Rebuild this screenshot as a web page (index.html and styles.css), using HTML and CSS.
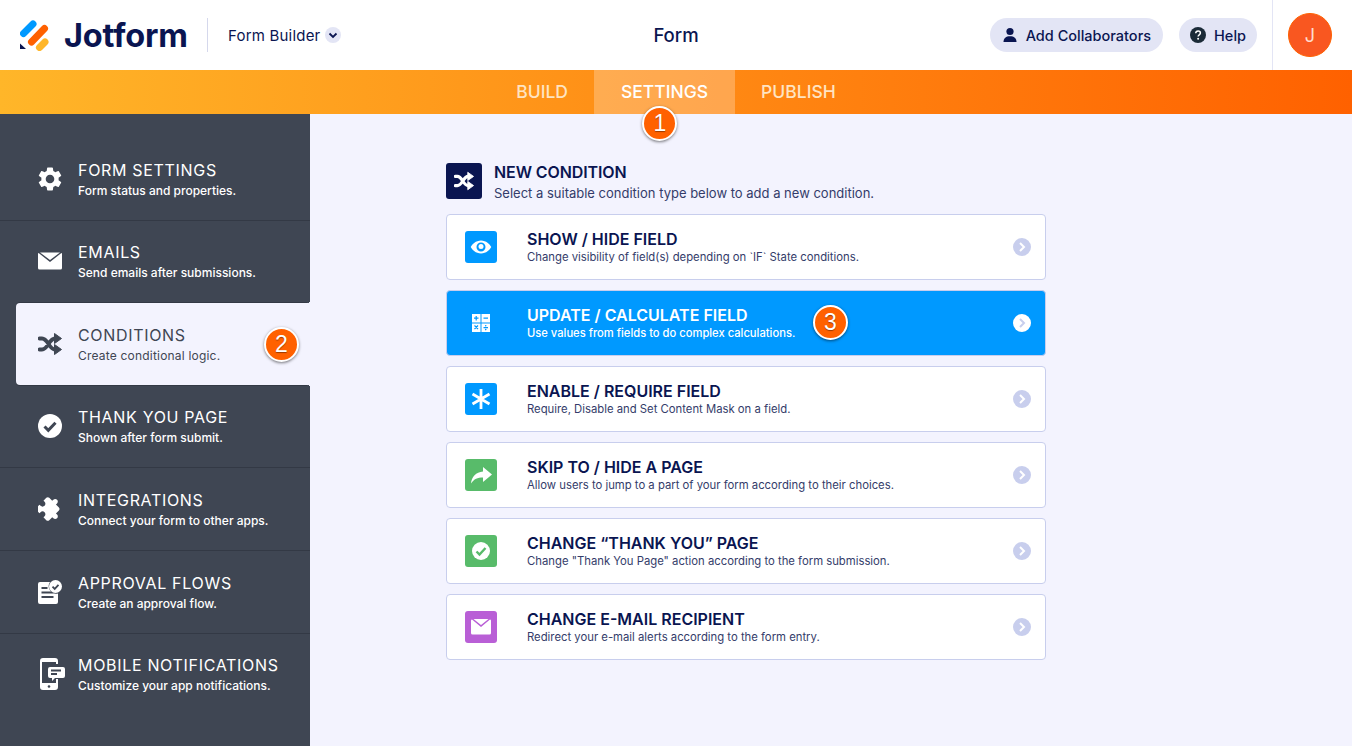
FILE: index.html
```html
<!DOCTYPE html>
<html lang="en">
<head>
<meta charset="utf-8">
<title>Jotform Form Builder</title>
<link rel="stylesheet" href="styles.css">
</head>
<body>
<svg class="defs" width="0" height="0" aria-hidden="true">
  <symbol id="shuffle" viewBox="0 0 24 24">
    <path d="M1.500 6.500h2.500c6 0 7 11 13 11h1M1.500 17.500h2.500c6 0 7-11 13-11h1" fill="none" stroke="currentColor" stroke-width="3.800" stroke-linecap="round"/>
    <path d="M16.500 1.500l7 5-7 5zM16.500 12.500l7 5-7 5z" fill="currentColor" stroke="currentColor" stroke-linejoin="round"/>
  </symbol>
  <symbol id="chev" viewBox="0 0 18 18">
    <path d="M7 5l4 4-4 4" fill="none" stroke="currentColor" stroke-width="2"/>
  </symbol>
</svg>
<header class="topbar">
  <div class="brand">
    <svg class="logo" viewBox="0 0 30 32" width="30" height="32">
      <path d="M3.500 14.500L13 5" stroke="#0099ff" stroke-width="7" stroke-linecap="round"/>
      <path d="M11.500 23L24.500 9.500" stroke="#ff6100" stroke-width="7" stroke-linecap="round"/>
      <path d="M19.500 28.500L25 23" stroke="#ffb629" stroke-width="7" stroke-linecap="round"/>
      <path d="M0 24.500V30h6z" fill="#0a1551"/>
    </svg>
    <span class="wordmark">Jotform</span>
    <span class="brand-sep"></span>
    <span class="builder">Form Builder</span>
    <span class="builder-caret"><svg viewBox="0 0 16 16" width="16" height="16"><path d="M4.500 6.500L8 10l3.500-3.500" fill="none" stroke="#0a1551" stroke-width="1.800"/></svg></span>
  </div>
  <div class="form-title">Form</div>
  <div class="actions">
    <button class="pill">
      <svg viewBox="0 0 16 16" width="16" height="16"><circle cx="8" cy="4.500" r="3.600" fill="#0a1551"/><path d="M1.500 15c0-4 2.500-5.800 6.500-5.800s6.500 1.800 6.500 5.800z" fill="#0a1551"/></svg>
      Add Collaborators
    </button>
    <button class="pill pill-help">
      <svg viewBox="0 0 16 16" width="16" height="16"><circle cx="8" cy="8" r="8" fill="#1b2b38"/><path d="M5.700 6.200C5.800 4.800 6.800 4 8.100 4s2.300.8 2.300 2c0 1.900-2.300 1.800-2.300 3.600" fill="none" stroke="#fff" stroke-width="1.500"/><circle cx="8.100" cy="11.700" r="1" fill="#fff"/></svg>
      Help
    </button>
    <div class="avatar-wrap"><div class="avatar">J</div></div>
  </div>
</header>
<nav class="tabs">
  <a class="tab">BUILD</a>
  <a class="tab active">SETTINGS<span class="badge badge-tab">1</span></a>
  <a class="tab">PUBLISH</a>
</nav>
<div class="layout">
  <aside class="sidebar">
    <a class="side-item">
      <svg class="side-icon" viewBox="2 2 20 20"><path fill="currentColor" d="M19.140 12.940c.04-.3.06-.61.06-.94 0-.32-.02-.64-.07-.94l2.030-1.580a.49.49 0 0 0 .12-.61l-1.920-3.320a.488.488 0 0 0-.59-.22l-2.390.96c-.5-.38-1.030-.7-1.620-.94l-.36-2.540a.484.484 0 0 0-.48-.41h-3.840c-.24 0-.43.17-.47.41l-.36 2.540c-.59.24-1.130.57-1.620.94l-2.390-.96c-.22-.08-.47 0-.59.22L2.740 8.870c-.12.21-.08.47.12.61l2.030 1.580c-.05.3-.09.63-.09.94s.02.64.07.94l-2.030 1.580a.49.49 0 0 0-.12.61l1.920 3.320c.12.22.37.29.59.22l2.390-.96c.5.38 1.030.7 1.620.94l.36 2.540c.05.24.24.41.48.41h3.840c.24 0 .44-.17.47-.41l.36-2.540c.59-.24 1.130-.56 1.620-.94l2.390.96c.22.08.47 0 .59-.22l1.920-3.320c.12-.22.07-.47-.12-.61l-2.010-1.580zM12 15.600c-1.980 0-3.600-1.620-3.600-3.600s1.620-3.600 3.600-3.600 3.600 1.620 3.600 3.600-1.620 3.600-3.600 3.600z"/></svg>
      <span class="side-text"><strong>FORM SETTINGS</strong><small>Form status and properties.</small></span>
    </a>
    <a class="side-item">
      <svg class="side-icon" viewBox="0 0 24 24"><path fill="currentColor" d="M0 4.500A1.500 1.500 0 0 1 .6 4L12 13 23.400 4a1.500 1.500 0 0 1 .6.500V19a1.500 1.500 0 0 1-1.500 1.500h-21A1.500 1.500 0 0 1 0 19zM2 3.500h20L12 11z"/></svg>
      <span class="side-text"><strong>EMAILS</strong><small>Send emails after submissions.</small></span>
    </a>
    <a class="side-item current">
      <svg class="side-icon" viewBox="0 0 24 24"><use href="#shuffle"/></svg>
      <span class="side-text"><strong>CONDITIONS</strong><small>Create conditional logic.</small></span>
      <span class="badge badge-side">2</span>
    </a>
    <a class="side-item">
      <svg class="side-icon" viewBox="0 0 24 24"><circle cx="12" cy="12" r="12" fill="currentColor"/><path d="M6.500 12.500l3.800 3.800 7.200-7.600" fill="none" stroke="#3f4653" stroke-width="3"/></svg>
      <span class="side-text"><strong>THANK YOU PAGE</strong><small>Shown after form submit.</small></span>
    </a>
    <a class="side-item">
      <svg class="side-icon" viewBox="0 0 24 24"><path fill="currentColor" transform="rotate(45 12 12) translate(-.6 -.6) scale(1.050)" d="M20.500 11H19V7c0-1.100-.9-2-2-2h-4V3.500C13 2.120 11.880 1 10.500 1S8 2.120 8 3.500V5H4c-1.100 0-1.990.9-1.990 2v3.800H3.500c1.490 0 2.700 1.210 2.700 2.700s-1.210 2.700-2.700 2.700H2V20c0 1.100.9 2 2 2h3.800v-1.500c0-1.490 1.210-2.700 2.700-2.700 1.490 0 2.700 1.210 2.700 2.700V22H17c1.100 0 2-.9 2-2v-4h1.500c1.380 0 2.500-1.120 2.500-2.500S21.880 11 20.500 11z"/></svg>
      <span class="side-text"><strong>INTEGRATIONS</strong><small>Connect your form to other apps.</small></span>
    </a>
    <a class="side-item">
      <svg class="side-icon" viewBox="0 0 24 24"><path fill="currentColor" d="M2 2h10a7.500 7.500 0 0 0 8 11.500V22a2 2 0 0 1-2 2H2a2 2 0 0 1-2-2V4a2 2 0 0 1 2-2z"/><path d="M3.500 8h6M3.500 12.500h12M3.500 17h12" stroke="#3f4653" stroke-width="2"/><circle cx="17.500" cy="6.500" r="6.500" fill="currentColor"/><path d="M14.500 6.700l2.200 2.200 3.800-4" fill="none" stroke="#3f4653" stroke-width="1.800"/></svg>
      <span class="side-text"><strong>APPROVAL FLOWS</strong><small>Create an approval flow.</small></span>
    </a>
    <a class="side-item last">
      <svg class="side-icon phone" viewBox="0 0 26 32"><path fill="currentColor" d="M4 0h12a3 3 0 0 1 3 3v3h-2V4H3v21h14v-4h2v8a3 3 0 0 1-3 3H4a3 3 0 0 1-3-3V3a3 3 0 0 1 3-3z"/><circle cx="10" cy="28.500" r="1.300" fill="#3f4653"/><path fill="currentColor" d="M11 9h13a2 2 0 0 1 2 2v7a2 2 0 0 1-2 2h-8l-3 3v-3h-2a2 2 0 0 1-2-2v-7a2 2 0 0 1 2-2z"/><path d="M12 12.500h10M12 16h6" stroke="#3f4653" stroke-width="1.800"/></svg>
      <span class="side-text"><strong>MOBILE NOTIFICATIONS</strong><small>Customize your app notifications.</small></span>
    </a>
  </aside>
  <main class="content">
    <section class="panel">
      <div class="panel-head">
        <span class="head-icon"><svg viewBox="0 0 24 24" width="20" height="20"><use href="#shuffle"/></svg></span>
        <div class="head-text">
          <h1>NEW CONDITION</h1>
          <p>Select a suitable condition type below to add a new condition.</p>
        </div>
      </div>
      <div class="cards">
        <a class="card">
          <span class="card-icon blue"><svg viewBox="0 0 24 24" width="24" height="24"><path fill="#fff" fill-rule="evenodd" d="M12 5.500c5.200 0 8.800 3.800 10.300 6.500-1.500 2.700-5.100 6.500-10.300 6.500S3.200 14.700 1.700 12C3.200 9.300 6.800 5.500 12 5.500zM12 7.500a4.500 4.500 0 1 0 0 9 4.500 4.500 0 0 0 0-9z"/><circle cx="12" cy="11.500" r="2.500" fill="#fff"/></svg></span>
          <span class="card-text"><strong>SHOW / HIDE FIELD</strong><small>Change visibility of field(s) depending on `IF` State conditions.</small></span>
          <span class="card-go"><svg viewBox="0 0 18 18" width="18" height="18"><use href="#chev"/></svg></span>
        </a>
        <a class="card selected">
          <span class="card-icon blue"><svg viewBox="0 0 18 18" width="18" height="18"><path fill="#fff" d="M0 0h8.500v8.500H0zM9.500 0H18v8.500H9.500zM0 9.500h8.500V18H0zM9.500 9.500H18V18H9.500z"/><path d="M2 4.200h4.500M4.200 2v4.500M11.500 4.200H16M2.500 11.500l3.500 3.500M6 11.500L2.500 15M11.500 13.700H16" stroke="#0099ff" stroke-width="1.200"/><circle cx="13.700" cy="11.800" r=".8" fill="#0099ff"/><circle cx="13.700" cy="15.600" r=".8" fill="#0099ff"/></svg></span>
          <span class="card-text"><strong>UPDATE / CALCULATE FIELD</strong><small>Use values from fields to do complex calculations.</small></span>
          <span class="badge badge-card">3</span>
          <span class="card-go"><svg viewBox="0 0 18 18" width="18" height="18"><use href="#chev"/></svg></span>
        </a>
        <a class="card">
          <span class="card-icon blue"><svg viewBox="0 0 24 24" width="24" height="24"><path d="M12 2v20M3.500 7l17 10M20.500 7l-17 10" stroke="#fff" stroke-width="2.800"/></svg></span>
          <span class="card-text"><strong>ENABLE / REQUIRE FIELD</strong><small>Require, Disable and Set Content Mask on a field.</small></span>
          <span class="card-go"><svg viewBox="0 0 18 18" width="18" height="18"><use href="#chev"/></svg></span>
        </a>
        <a class="card">
          <span class="card-icon green"><svg viewBox="0 0 24 24" width="24" height="24"><path fill="#fff" d="M14 4l9 7.500-9 7.500v-4.500c-5.500 0-9 1.500-12 6 .5-6.500 5-11.500 12-12z"/></svg></span>
          <span class="card-text"><strong>SKIP TO / HIDE A PAGE</strong><small>Allow users to jump to a part of your form according to their choices.</small></span>
          <span class="card-go"><svg viewBox="0 0 18 18" width="18" height="18"><use href="#chev"/></svg></span>
        </a>
        <a class="card">
          <span class="card-icon green"><svg viewBox="0 0 24 24" width="24" height="24"><circle cx="12" cy="12" r="9" fill="#fff"/><path d="M7.500 12.500l3 3 6-6.500" fill="none" stroke="#58bb6a" stroke-width="2.400"/></svg></span>
          <span class="card-text"><strong>CHANGE “THANK YOU” PAGE</strong><small>Change "Thank You Page" action according to the form submission.</small></span>
          <span class="card-go"><svg viewBox="0 0 18 18" width="18" height="18"><use href="#chev"/></svg></span>
        </a>
        <a class="card">
          <span class="card-icon purple"><svg viewBox="0 0 24 24" width="24" height="24"><path fill="#fff" d="M2 5.500A1.500 1.500 0 0 1 3 4.600L12 12l9-7.400a1.500 1.500 0 0 1 1 .9V18a1.500 1.500 0 0 1-1.500 1.500h-17A1.500 1.500 0 0 1 2 18zM4.500 4h15L12 10z"/></svg></span>
          <span class="card-text"><strong>CHANGE E-MAIL RECIPIENT</strong><small>Redirect your e-mail alerts according to the form entry.</small></span>
          <span class="card-go"><svg viewBox="0 0 18 18" width="18" height="18"><use href="#chev"/></svg></span>
        </a>
      </div>
    </section>
  </main>
</div>
</body>
</html>
```

FILE: styles.css
```css
* { box-sizing: border-box; }
html, body { margin: 0; height: 100%; }
body {
  width: 1352px;
  height: 746px;
  overflow: hidden;
  background: #f3f3fe;
  color: #0a1551;
  font-family: "Inter", "Noto Sans", sans-serif;
  display: flex;
  flex-direction: column;
}
.defs { position: absolute; }
a { display: flex; color: inherit; text-decoration: none; }

/* top bar */
.topbar {
  height: 70px;
  flex: none;
  background: #fff;
  display: grid;
  grid-template-columns: 1fr auto 1fr;
  align-items: center;
}
.brand { display: flex; align-items: center; padding-left: 20px; }
.logo { flex: none; margin-right: 14px; }
.wordmark {
  font-size: 32.500px;
  font-weight: 700;
  letter-spacing: -.2px;
  color: #0a1551;
  width: 124px;
  white-space: nowrap;
}
.brand-sep { width: 1px; height: 34px; background: #d5d8ec; margin: 0 20px 0 19px; }
.builder { font-size: 15px; letter-spacing: .2px; color: #0a1551; }
.builder-caret {
  width: 16px; height: 16px; border-radius: 50%;
  background: #e3e5f5; margin-left: 5px; display: flex;
}
.form-title { font-size: 18.500px; font-weight: 500; color: #0a1551; }
.actions { display: flex; align-items: center; justify-content: flex-end; height: 100%; }
.pill {
  height: 34px;
  border: 0;
  border-radius: 17px;
  background: #e3e5f5;
  color: #0a1551;
  display: flex;
  align-items: center;
  gap: 8px;
  padding: 0 12px;
  font: 500 14.500px "Inter", sans-serif;
  margin-right: 16px;
  white-space: nowrap;
}
.pill-help { padding: 0 11px; margin-right: 15px; }
.avatar-wrap {
  width: 80px; height: 100%;
  border-left: 1px solid #e3e5f5;
  display: flex; align-items: center;
  padding-left: 15px;
}
.avatar {
  width: 44px; height: 44px; border-radius: 50%;
  background: #f95720; border: 1px solid #ff6100;
  color: #ffdccf; font-size: 18px; font-weight: 400;
  display: flex; align-items: center; justify-content: center;
}

/* tabs */
.tabs {
  height: 44px;
  flex: none;
  background: linear-gradient(90deg, #ffb629, #ff6100);
  display: flex;
  justify-content: center;
}
.tab {
  position: relative;
  align-items: center;
  padding: 0 26.500px 2px;
  font-size: 17.500px;
  font-weight: 500;
  color: #ffe4c2;
  height: 100%;
}
.tab.active { background: rgba(255,255,255,.25); color: #fff; }

/* badges */
.badge {
  position: absolute;
  width: 35px; height: 35px;
  border-radius: 50%;
  background: #ff6100;
  border: 2px solid #fff;
  box-shadow: 0 1px 3px rgba(0,0,0,.5);
  color: #fff;
  font: 400 23px "Liberation Sans", sans-serif;
  text-shadow: 0 1px 1px rgba(0,0,0,.4);
  display: flex; align-items: center; justify-content: center;
}
.badge-tab { left: 48px; top: 36px; }
.badge-side { left: 248px; top: 24px; }
.badge-card { left: 366px; top: 14px; }

/* layout */
.layout { flex: 1; display: flex; min-height: 0; }
.sidebar {
  width: 310px; flex: none;
  background: #3f4653;
  padding-top: 24px;
  color: #fff;
}
.side-item {
  position: relative;
  height: 83px;
  align-items: flex-start;
  padding: 22px 0 0 38px;
  gap: 16px;
  border-bottom: 1px solid #333945;
}
.side-item:nth-child(2) { height: 82px; border-bottom: 0; padding-top: 21px; }
.side-item.last { border-bottom: 0; padding-top: 21px; }
.side-item.current {
  height: 82px;
  margin-left: 16px;
  padding-left: 22px;
  background: #f3f3fe;
  color: #3f4653;
  border-radius: 4px 0 0 4px;
  border-bottom: 0;
  box-shadow: 0 -1px 0 #333945, 0 1px 0 #333945;
}
.side-item.current::before,
.side-item.current::after {
  content: "";
  position: absolute;
  right: 0;
  width: 3px;
  height: 3px;
}
.side-item.current::before { top: -3px; background: radial-gradient(circle at 0 0, #3f4653 3px, #f3f3fe 3.500px); }
.side-item.current::after { bottom: -3px; background: radial-gradient(circle at 0 100%, #3f4653 3px, #f3f3fe 3.500px); }
.side-icon { width: 24px; height: 24px; flex: none; margin-top: 7px; }
.side-icon.phone { width: 26px; height: 32px; margin: 3px -3px 0 1px; }
.side-text { display: flex; flex-direction: column; }
.side-text strong { font-size: 16px; font-weight: 400; letter-spacing: .68px; line-height: 20px; white-space: nowrap; }
.side-text small { font-size: 12px; font-weight: 500; line-height: 20px; margin-top: 1px; white-space: nowrap; }
.side-item.current .side-text small { font-weight: 400; letter-spacing: .2px; }

/* content */
.content { flex: 1; padding: 49px 0 0 136px; }
.panel { width: 600px; }
.panel-head { display: flex; gap: 12px; height: 36px; margin-bottom: 15px; }
.head-icon {
  width: 36px; height: 36px; border-radius: 3px;
  background: #0a1551; color: #fff;
  display: flex; align-items: center; justify-content: center;
}
.head-text h1 { margin: -1px 0 0; font-size: 16px; font-weight: 600; line-height: 20px; letter-spacing: -.1px; }
.head-text p { margin: 1px 0 0; font-size: 13px; line-height: 20px; color: #343c6a; white-space: nowrap; }
.cards { display: flex; flex-direction: column; gap: 10px; }
.card {
  position: relative;
  height: 66px;
  background: #fff;
  border: 1px solid #c8ceed;
  border-radius: 4px;
  align-items: center;
  padding: 0 14px 0 18px;
}
.card.selected { background: #0099ff; border-color: #c8ceed; color: #fff; }
.card-icon {
  width: 32px; height: 32px; border-radius: 3px; flex: none;
  display: flex; align-items: center; justify-content: center;
  margin-right: 30px;
}
.blue { background: #0099ff; }
.green { background: #58bb6a; }
.purple { background: #b95fd6; }
.card-text { flex: 1; display: flex; flex-direction: column; }
.card-text strong { font-size: 16px; font-weight: 600; line-height: 18px; white-space: nowrap; }
.card-text small { font-size: 11.300px; line-height: 15px; margin-top: 2px; color: #343c6a; white-space: nowrap; }
.selected .card-text small { color: #fff; font-weight: 500; font-size: 11.200px; }
.card-go {
  width: 18px; height: 18px; border-radius: 50%;
  background: #c8ceed; color: #fff; flex: none; display: flex;
}
.selected .card-go { background: #fff; color: #c8ceed; }
```
